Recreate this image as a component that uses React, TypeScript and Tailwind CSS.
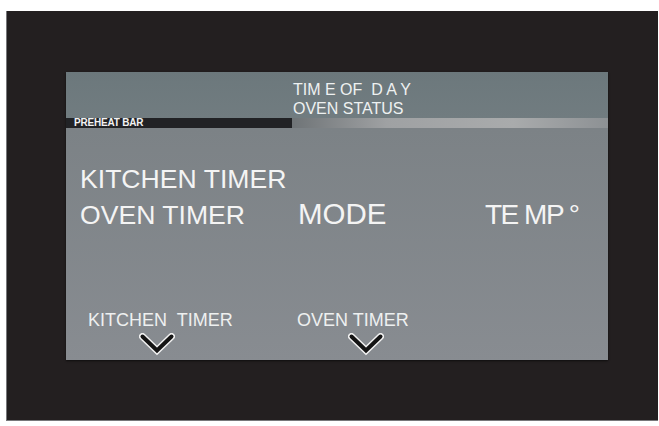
import React from "react";

function Chevron() {
  return (
    <svg width="36" height="23" viewBox="0 0 36 23" className="block">
      <polyline
        points="3.5,3.5 18,17.5 32.5,3.5"
        fill="none"
        stroke="#f2f2f2"
        strokeWidth="7"
        strokeLinejoin="miter"
        strokeLinecap="round"
      />
      <polyline
        points="3.5,3.5 18,17.5 32.5,3.5"
        fill="none"
        stroke="#141414"
        strokeWidth="4"
        strokeLinejoin="miter"
        strokeLinecap="round"
      />
    </svg>
  );
}

function BottomLabel({ label }: { label: string }) {
  return (
    <div className="flex flex-col">
      <span className="whitespace-pre text-[18px] leading-[20px] text-[#eef0f0]">
        {label}
      </span>
      <div className="ml-[51px] mt-[3px]">
        <Chevron />
      </div>
    </div>
  );
}

export default function App() {
  return (
    <div
      className="w-[659px] h-[426px] bg-white pt-[11px] pl-[6px] overflow-hidden"
      style={{ fontFamily: '"Liberation Sans", Arial, sans-serif' }}
    >
      <div className="w-[652px] h-[410px] bg-[#231f20] border-l border-b border-[#77777a] pt-[61px] pl-[59px]">
        <div className="w-[542px] h-[288px] flex flex-col shadow-[0_1px_2px_rgba(0,0,0,0.6)]">
          {/* header */}
          <div className="h-[46px] bg-gradient-to-b from-[#6c787c] to-[#717c80] pl-[227px] pt-[8px] text-[16px] leading-[19px] text-[#eef1f1]">
            <div className="whitespace-pre">TIM E OF  D A Y</div>
            <div>OVEN STATUS</div>
          </div>

          {/* preheat bar */}
          <div className="h-[10px] flex">
            <div className="w-[226px] bg-[#212225] pl-[8px] flex items-center">
              <span className="text-[10px] leading-[10px] font-bold text-[#f2f2f2] tracking-[-0.2px]">
                PREHEAT BAR
              </span>
            </div>
            <div className="flex-1 bg-[linear-gradient(to_right,#6f7477,#9fa1a3_30%,#a9abac_70%,#8d9194)]" />
          </div>

          {/* main area */}
          <div className="flex-1 bg-gradient-to-b from-[#7c8286] to-[#888c91] flex flex-col text-[#f4f4f4]">
            <div className="pl-[14px] pt-[36px] text-[26.6px] leading-[30px]">
              KITCHEN TIMER
            </div>
            <div className="flex items-baseline pl-[14px] mt-[5px] leading-[30px]">
              <span className="w-[218px] text-[26.6px]">OVEN TIMER</span>
              <span className="w-[187px] text-[29.5px]">MODE</span>
              <span className="whitespace-pre text-[28px] tracking-[-1.5px]">
                TE MP °
              </span>
            </div>
            <div className="flex pl-[22px] mt-[80px]">
              <div className="w-[209px]">
                <BottomLabel label="KITCHEN  TIMER" />
              </div>
              <BottomLabel label="OVEN TIMER" />
            </div>
          </div>
        </div>
      </div>
    </div>
  );
}
